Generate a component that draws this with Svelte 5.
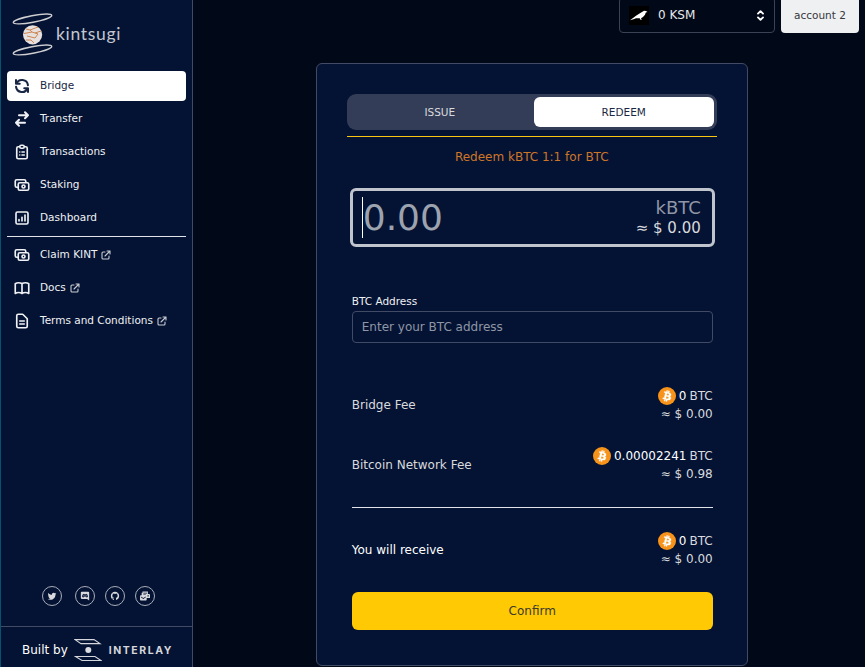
<script>
  const icons = {
    bridge: 'M4 4v5h.582m15.356 2A8.001 8.001 0 004.582 9m0 0H9m11 11v-5h-.581m0 0a8.003 8.003 0 01-15.357-2m15.357 2H15',
    transfer: 'M8 7h12m0 0l-4-4m4 4l-4 4m0 6H4m0 0l4 4m-4-4l4-4',
    list: 'M9 5H7a2 2 0 00-2 2v12a2 2 0 002 2h10a2 2 0 002-2V7a2 2 0 00-2-2h-2M9 5a2 2 0 002 2h2a2 2 0 002-2M9 5a2 2 0 012-2h2a2 2 0 012 2m-3 7h3m-3 4h3m-6-4h.01M9 16h.01',
    cash: 'M17 9V7a2 2 0 00-2-2H5a2 2 0 00-2 2v6a2 2 0 002 2h2m2 4h10a2 2 0 002-2v-6a2 2 0 00-2-2H9a2 2 0 00-2 2v6a2 2 0 002 2zm7-5a2 2 0 11-4 0 2 2 0 014 0z',
    chart: 'M16 8v8m-4-5v5m-4-2v2m-2 4h12a2 2 0 002-2V6a2 2 0 00-2-2H6a2 2 0 00-2 2v12a2 2 0 002 2z',
    book: 'M12 6.253v13m0-13C10.832 5.477 9.246 5 7.5 5S4.168 5.477 3 6.253v13C4.168 18.477 5.754 18 7.5 18s3.332.477 4.5 1.253m0-13C13.168 5.477 14.754 5 16.5 5c1.747 0 3.332.477 4.5 1.253v13C19.832 18.477 18.247 18 16.5 18c-1.746 0-3.332.477-4.5 1.253',
    doc: 'M9 12h6m-6 4h6m2 5H7a2 2 0 01-2-2V5a2 2 0 012-2h5.586a1 1 0 01.707.293l5.414 5.414a1 1 0 01.293.707V19a2 2 0 01-2 2z',
    external: 'M10 6H6a2 2 0 00-2 2v10a2 2 0 002 2h10a2 2 0 002-2v-4M14 4h6m0 0v6m0-6L10 14',
    selector: 'M8 9l4-4 4 4m0 6l-4 4-4-4'
  };
  const heavy = { bridge: 2.7, transfer: 2.7, selector: 3 };

  const pages = [
    { label: 'Bridge', icon: 'bridge', active: true },
    { label: 'Transfer', icon: 'transfer' },
    { label: 'Transactions', icon: 'list' },
    { label: 'Staking', icon: 'cash' },
    { label: 'Dashboard', icon: 'chart' }
  ];
  const links = [
    { label: 'Claim KINT', icon: 'cash' },
    { label: 'Docs', icon: 'book' },
    { label: 'Terms and Conditions', icon: 'doc' }
  ];

  const socials = [
    { name: 'Twitter', path: 'M22.46 6c-.77.35-1.6.58-2.46.69.88-.53 1.56-1.37 1.88-2.38-.83.5-1.75.85-2.72 1.05C18.37 4.5 17.26 4 16 4c-2.35 0-4.27 1.92-4.27 4.29 0 .34.04.67.11.98C8.28 9.09 5.11 7.38 3 4.79c-.37.63-.58 1.37-.58 2.15 0 1.49.75 2.81 1.91 3.56-.71 0-1.37-.2-1.95-.5v.03c0 2.08 1.48 3.82 3.44 4.21a4.22 4.22 0 0 1-1.93.07 4.28 4.28 0 0 0 4 2.98 8.521 8.521 0 0 1-5.33 1.84c-.34 0-.68-.02-1.02-.06C3.44 20.29 5.7 21 8.12 21 16 21 20.33 14.46 20.33 8.79c0-.19 0-.37-.01-.56.84-.6 1.56-1.36 2.14-2.23z' },
    { name: 'Discord', path: 'M4 2H20a2 2 0 0 1 2 2V23L17 19H4a2 2 0 0 1-2-2V4a2 2 0 0 1 2-2zM9 6.500Q5 7 5 14Q7 16 9 15L9.500 14H14.500L15 15Q17 16 19 14Q19 7 15 6.500L14.500 7.500H9.500zM9.500 10a1.300 1.500 0 1 1 0 3a1.300 1.500 0 1 1 0-3zM14.500 10a1.300 1.500 0 1 1 0 3a1.300 1.500 0 1 1 0-3z' },
    { name: 'GitHub', path: 'M12 2A10 10 0 0 0 2 12c0 4.42 2.87 8.17 6.84 9.5.5.08.66-.23.66-.5v-1.69c-2.77.6-3.36-1.34-3.36-1.34-.46-1.16-1.11-1.47-1.11-1.47-.91-.62.07-.6.07-.6 1 .07 1.53 1.03 1.53 1.03.87 1.52 2.34 1.07 2.91.83.09-.65.35-1.09.63-1.34-2.22-.25-4.55-1.11-4.55-4.92 0-1.11.38-2 1.03-2.71-.1-.25-.45-1.29.1-2.64 0 0 .84-.27 2.75 1.02.79-.22 1.65-.33 2.5-.33.85 0 1.71.11 2.5.33 1.91-1.29 2.75-1.02 2.75-1.02.55 1.35.2 2.39.1 2.64.65.71 1.03 1.6 1.03 2.71 0 3.82-2.34 4.66-4.57 4.91.36.31.69.92.69 1.85V21c0 .27.16.59.67.5C19.14 20.16 22 16.42 22 12A10 10 0 0 0 12 2z' },
    { name: 'Mail', path: 'M6 1H19V7H22a2 2 0 0 1 2 2V17H16V21a2 2 0 0 1-2 2H2a2 2 0 0 1-2-2V12a2 2 0 0 1 2-2H4V4H6zM8 4V6H17V4zM2 13V15L8 19L14 15V13L8 17zM18 10V13H21V10zM8 8V9H14V8z' }
  ];

  const btcPath = 'M23.189 14.02c.314-2.096-1.283-3.223-3.465-3.975l.708-2.84-1.728-.43-.69 2.765c-.454-.114-.92-.22-1.385-.326l.695-2.783L15.596 6l-.708 2.839c-.376-.086-.746-.17-1.104-.26l.002-.009-2.384-.595-.46 1.846s1.283.294 1.256.312c.7.175.826.638.805 1.006l-.806 3.235c.048.012.11.03.18.057l-.183-.045-1.13 4.532c-.086.212-.303.531-.793.41.018.025-1.256-.313-1.256-.313l-.858 1.978 2.25.561c.418.105.828.215 1.231.318l-.715 2.872 1.727.43.708-2.84c.472.127.93.245 1.378.357l-.706 2.828 1.728.43.715-2.866c2.948.558 5.164.333 6.097-2.333.752-2.146-.037-3.385-1.588-4.192 1.13-.26 1.98-1.003 2.207-2.538zm-3.95 5.538c-.533 2.147-4.148.986-5.32.695l.95-3.805c1.172.293 4.929.872 4.37 3.11zm.535-5.569c-.487 1.953-3.495.96-4.47.717l.86-3.45c.975.243 4.118.696 3.61 2.733z';
</script>

{#snippet stroke(name, size)}
  <svg class="stroke" width={size} height={size} viewBox="0 0 24 24" stroke-width={heavy[name] ?? 2.2}><path d={icons[name]} /></svg>
{/snippet}

{#snippet fee(label, amount, usd, bright)}
  <div class="fee">
    <span class:bright>{label}</span>
    <div class="values">
      <div class="amount">
        <svg width="18" height="18" viewBox="0 0 32 32"><circle cx="16" cy="16" r="16" fill="#f7931a" /><path fill="#fff" stroke="#fff" stroke-width="0.600" d={btcPath} /></svg>
        <b>{amount}</b><span>BTC</span>
      </div>
      <div class="usd">≈ $ {usd}</div>
    </div>
  </div>
{/snippet}

<div class="app">
  <aside>
    <div class="logo">
      <svg width="42" height="46" viewBox="0 0 42 46">
        <g fill="none" stroke="#cfcfd2" stroke-width="1.3">
          <ellipse cx="20.500" cy="7" rx="19.600" ry="3.300" transform="rotate(-11 20.500 7)" />
          <ellipse cx="20.500" cy="38" rx="19.600" ry="3.300" transform="rotate(-11 20.500 38)" />
        </g>
        <circle cx="20.600" cy="22.800" r="9.600" fill="#e6e1df" />
        <g fill="none" stroke="#cf8550" stroke-width="1">
          <path d="M14 17L18 18L26 15M12 21.500L20 20L26 22L23 26L15 24M14 28L19 28L22 31M23 21L29 19M18 18L20 20" />
        </g>
      </svg>
      <span>kintsugi</span>
    </div>
    <nav>
      {#each pages as item}
        <a class:active={item.active}>{@render stroke(item.icon, 18)}<span>{item.label}</span></a>
      {/each}
    </nav>
    <hr />
    <nav>
      {#each links as item}
        <a>{@render stroke(item.icon, 18)}<span>{item.label}</span><i>{@render stroke('external', 12)}</i></a>
      {/each}
    </nav>
    <div class="socials">
      {#each socials as s}
        <a aria-label={s.name}><svg width="10" height="10" viewBox="0 0 24 24"><path fill-rule="evenodd" d={s.path} /></svg></a>
      {/each}
    </div>
    <footer>
      <span>Built by</span>
      <svg width="28" height="23" viewBox="0 0 28 23">
        <g fill="none" stroke="#d5d7dc" stroke-width="1.100">
          <path d="M1 0.600H20L26 4.600H7ZM1.500 17.500H21L27 21.500H8Z" />
        </g>
        <circle cx="14.300" cy="11" r="3" fill="#dcdde0" />
      </svg>
      <strong>INTERLAY</strong>
    </footer>
  </aside>

  <main>
    <header>
      <div class="balance">
        <svg width="20" height="19" viewBox="0 0 20 19">
          <rect width="20" height="19" />
          <path fill="#fff" d="M1 14.300L7 9.800L10.500 7.500L13 6L15 4.800L17 5L18.500 6L16.800 6.400L16 8.700L14 11L12 12.200L12.800 14L11.200 13.500L10.800 12.300L7 12.200L4.500 13.300Z" />
        </svg>
        <span>0 KSM</span>
        {@render stroke('selector', 15)}
      </div>
      <button class="account">account 2</button>
    </header>

    <section class="card">
      <div class="tabs"><div>ISSUE</div><div class="selected">REDEEM</div></div>
      <div class="accent"></div>
      <h1>Redeem kBTC 1:1 for BTC</h1>
      <div class="body">
        <div class="amount-field">
          <div class="placeholder">0.00</div>
          <div class="unit"><div>kBTC</div><p>≈ $ 0.00</p></div>
        </div>
        <div class="label">BTC Address</div>
        <div class="address">Enter your BTC address</div>
        <div class="fees">
          {@render fee('Bridge Fee', '0', '0.00', false)}
          {@render fee('Bitcoin Network Fee', '0.00002241', '0.98', false)}
        </div>
        <div class="rule"></div>
        {@render fee('You will receive', '0', '0.00', true)}
        <button class="confirm">Confirm</button>
      </div>
    </section>
  </main>
</div>

<style>
  :global(body) { background: #010817; overflow: hidden; }
  * { box-sizing: border-box; }
  .app {
    display: flex;
    height: 667px;
    overflow: hidden;
    font-family: "DejaVu Sans", sans-serif;
    font-size: 12px;
    line-height: 18px;
    color: #d9dade;
    background: #010817;
  }
  svg { display: block; flex: none; }
  .stroke { fill: none; stroke: currentColor; stroke-linecap: round; stroke-linejoin: round; }
  button { font: inherit; border: 0; padding: 0; }

  aside {
    flex: none;
    width: 193px;
    display: flex;
    flex-direction: column;
    background: #041333;
    border-left: 1px solid #055371;
    border-right: 1px solid #414b65;
  }
  .logo { display: flex; align-items: center; height: 71px; padding: 0 0 1px 11px; }
  .logo span { font: 400 17.500px/24px Lato, sans-serif; letter-spacing: 0.700px; margin: 0 0 2px 2px; color: #c3c6cf; }
  nav { display: flex; flex-direction: column; gap: 3px; padding: 0 6px; }
  nav a {
    display: flex;
    align-items: center;
    height: 30px;
    padding-left: 6px;
    border-radius: 4px;
    font-size: 10.500px;
    color: #f0f1f4;
  }
  nav a span { margin: 0 3px 0 9px; padding-bottom: 3px; }
  nav a i { color: #c9ccd4; }
  nav a.active { background: #fff; color: #1a2744; }
  hr { width: 179px; height: 1px; border: 0; margin: 3px 6px; background: #e1e3ea; }
  .socials { display: flex; gap: 10px; margin: auto 0 20px 41px; }
  .socials a {
    width: 20px;
    height: 20px;
    display: flex;
    align-items: center;
    justify-content: center;
    border: 1px solid #a9adb9;
    border-radius: 50%;
  }
  .socials a:first-child { margin-right: 3px; }
  .socials path { fill: #d9dade; }
  footer {
    display: flex;
    align-items: center;
    height: 41px;
    padding: 6px 0 0 21px;
    border-top: 1px solid #414b65;
    color: #fff;
  }
  footer svg { margin: 0 7px 0 6px; }
  footer strong { font: 700 10.500px/12px Inter, sans-serif; letter-spacing: 1.550px; padding-top: 2px; color: #d5d7dc; }

  main { flex: 1; display: flex; flex-direction: column; align-items: center; padding-left: 5.500px; }
  header { align-self: flex-end; display: flex; gap: 6px; margin: -3px 6px 0 0; height: 36px; }
  .balance {
    width: 156px;
    display: flex;
    align-items: center;
    padding: 0 6px 0 9px;
    border: 1px solid #3c4254;
    border-radius: 4px;
    color: #e8e9ec;
  }
  .balance span { flex: 1; margin-left: 9px; }
  .balance > :global(.stroke) { color: #fff; }
  .account { width: 78px; background: #eff0f2; color: #35373c; font-size: 10.500px; border-radius: 4px; }

  .card {
    width: 432px;
    height: 603px;
    margin-top: 30px;
    padding: 30px;
    background: #041333;
    border: 1px solid #414b65;
    border-radius: 6px;
  }
  .tabs { display: flex; height: 36px; padding: 3px; background: #333d58; border-radius: 9px; font-size: 10.500px; }
  .tabs div { width: 180px; line-height: 30px; text-align: center; margin-left: 4px; }
  .tabs div:first-child { margin-left: 0; }
  .tabs .selected { background: #fff; color: #1a2744; border-radius: 6px; }
  .accent { height: 1px; margin-top: 6px; background: #f9c70f; }
  h1 { margin: 11px 0 0; font-size: 12px; line-height: 18px; font-weight: 400; text-align: center; color: #cf7527; }
  .body { padding: 0 4px 0 5px; }
  .amount-field {
    display: flex;
    justify-content: space-between;
    height: 59px;
    margin: 22px -2px 0;
    padding: 6px 11px 0 8px;
    border: 3px solid #c0c4cd;
    border-radius: 6px;
  }
  .placeholder { height: 41px; border-left: 1px solid #fff; font-size: 36px; line-height: 42px; color: #9ca3af; margin-left: 1px; }
  .unit { padding-top: 1px; text-align: right; font-size: 18px; line-height: 20px; color: #8f96a6; }
  .unit p { margin: 0; font-size: 15px; color: #d9dade; }
  .label { margin: 45px 0 1px; font-size: 10.500px; color: #f0f1f4; }
  .address { height: 32px; padding: 0 9px; line-height: 30px; border: 1px solid #414b65; border-radius: 4px; color: #8f96a6; }
  .fees { display: flex; flex-direction: column; gap: 24px; margin-top: 44px; }
  .fee { display: flex; justify-content: space-between; align-items: center; height: 36px; }
  .values { text-align: right; }
  .amount { display: flex; gap: 3px; justify-content: flex-end; }
  .amount b { font-weight: 400; color: #fff; }
  .bright { color: #fff; }
  .rule { height: 1px; margin: 24px 0; background: #e1e3ea; }
  .confirm { width: 100%; height: 38px; margin-top: 24px; border-radius: 6px; background: #ffc903; color: #3b3a2b; }
</style>
